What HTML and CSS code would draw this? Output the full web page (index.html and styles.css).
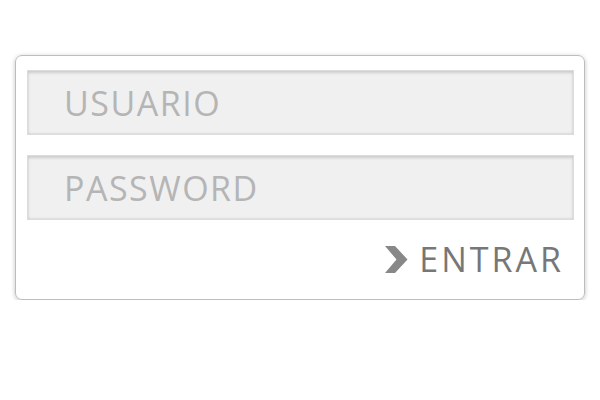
FILE: index.html
```html
<!DOCTYPE html>
<html>
<head>
<meta charset="utf-8">
<link rel="stylesheet" href="styles.css">
</head>
<body>
<form class="card">
  <div class="field"><input class="input" type="text" placeholder="USUARIO"></div>
  <div class="field"><input class="input" type="password" placeholder="PASSWORD"></div>
  <div class="actions">
    <button class="submit" type="button">
      <svg class="chev" width="24" height="27" viewBox="0 0 24 27"><path d="M1 0 H11 L23.5 13.5 L11 27 H1 L12.5 13.5 Z" fill="#888"/></svg>
      <span class="label">ENTRAR</span>
    </button>
  </div>
</form>
</body>
</html>
```
FILE: styles.css
```css
html, body { margin: 0; padding: 0; background: #fff; }
body { font-family: "Open Sans", "DejaVu Sans", sans-serif; }
.card {
  box-sizing: border-box;
  margin: 55px 0 0 15px;
  width: 570px;
  height: 245px;
  border: 1px solid #bdbdbd;
  border-radius: 7px;
  box-shadow: 0 1px 4px rgba(0,0,0,0.25);
  padding: 14px 10px 0 11px;
  display: flex;
  flex-direction: column;
  gap: 20px;
}
.field { display: flex; }
.input {
  box-sizing: border-box;
  width: 547px;
  height: 65px;
  border: 1px solid #dcdcdc;
  background: #f0f0f0;
  box-shadow: inset 0 2px 3px rgba(0,0,0,0.15), inset 0 -1px 2px rgba(0,0,0,0.08);
  padding: 0 0 0 36px;
  font-family: inherit;
  font-size: 34px;
  letter-spacing: 1.5px;
  color: #999;
  outline: none;
}
.input::placeholder { color: #b5b5b5; opacity: 1; }
.actions { display: flex; justify-content: flex-end; margin-top: -4px; }
.submit {
  display: flex;
  align-items: center;
  gap: 11px;
  background: none;
  border: none;
  padding: 0 10px 0 0;
  font-family: inherit;
  font-size: 34px;
  letter-spacing: 3px;
  color: #777;
  cursor: pointer;
}
.chev { display: block; flex-shrink: 0; }
```
